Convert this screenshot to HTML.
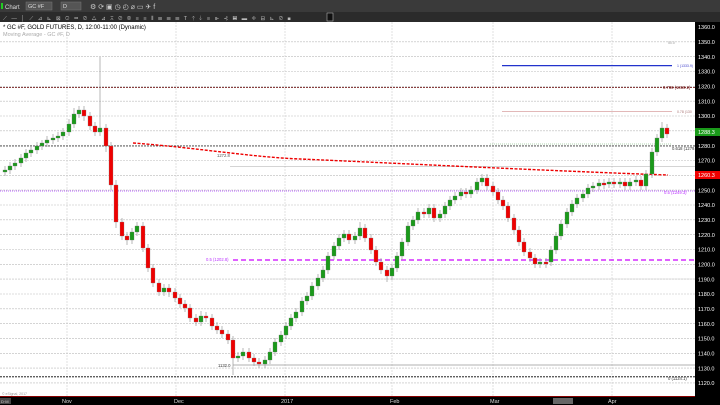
<!DOCTYPE html>
<html><head><meta charset="utf-8"><style>
html,body{margin:0;padding:0;width:720px;height:405px;overflow:hidden;background:#fff}
svg{display:block}
.g{fill:#1a9a1a;stroke:#777;stroke-width:0.3}
.r{fill:#ee0000;stroke:#888;stroke-width:0.3}
</style></head><body>
<svg width="720" height="405" viewBox="0 0 720 405" xmlns="http://www.w3.org/2000/svg" font-family="Liberation Sans, sans-serif">
<rect x="0" y="0" width="720" height="12" fill="#3a3a3a"/>
<rect x="0" y="12" width="720" height="10" fill="#2b2b2b"/>
<rect x="1" y="3" width="2" height="6" fill="#2c2"/>
<text x="5" y="9" font-size="6" fill="#ddd">Chart</text>
<rect x="26" y="2" width="26" height="8" fill="#555" stroke="#777" stroke-width="0.5"/>
<text x="28" y="8" font-size="5.5" fill="#ddd">GC #F</text>
<rect x="61" y="2" width="20" height="8" fill="#555" stroke="#777" stroke-width="0.5"/>
<text x="63" y="8" font-size="5.5" fill="#ddd">D</text>
<text x="90" y="9" font-size="7" fill="#ccc">⚙ ⟳ ▣ ◷ ◴ ⌀ ▭ ✈ f</text>
<text x="3" y="20" font-size="5.5" fill="#bbb" letter-spacing="1.5">⟋ — │ ⟋ ⊿ ⊾ ⊠ ⊙ ▭ ⊘ △ ⊿ ⊼ ⊘ ⊚ ≡ ≡ ⫴ ☰ ☰ ☰ T ⇡ ⇣ ≡ ⊪ ⊰ ▤ ▬ ◈ ⊟ ⊾ ⊘ ◼</text>
<rect x="327" y="13" width="6" height="8" fill="#111" stroke="#ccc" stroke-width="0.5"/>

<g stroke="#bbb" stroke-width="0.6" stroke-dasharray="2,1">
<path d="M0 41.8H695M0 56.7H695M0 71.5H695M0 86.3H695M0 101.2H695M0 116H695M0 130.8H695M0 145.6H695M0 160.5H695M0 175.3H695M0 190.1H695M0 205H695M0 219.8H695M0 234.6H695M0 249.5H695M0 264.3H695M0 279.1H695M0 294H695M0 308.8H695M0 323.6H695M0 338.4H695M0 353.3H695M0 368.1H695M0 382.9H695"/>
</g>
<g stroke="#ccc" stroke-width="0.6" stroke-dasharray="2,1">
<path d="M67 22V396M176 22V396M285 22V396M392 22V396M493 22V396M612 22V396"/>
</g>

<line x1="502" y1="65.6" x2="672" y2="65.6" stroke="#2233cc" stroke-width="1.2"/>
<line x1="0" y1="87.5" x2="695" y2="87.5" stroke="#660000" stroke-width="0.8" stroke-dasharray="2,1"/>
<line x1="502" y1="111.5" x2="672" y2="111.5" stroke="#d9a0a0" stroke-width="0.8"/>
<line x1="0" y1="146" x2="695" y2="146" stroke="#333" stroke-width="0.8" stroke-dasharray="2,1"/>
<line x1="490" y1="144" x2="672" y2="144" stroke="#6a6" stroke-width="0.6" stroke-dasharray="1,1"/>
<line x1="0" y1="191" x2="695" y2="191" stroke="#bb66ff" stroke-width="1" stroke-dasharray="1,1"/>
<line x1="233" y1="260" x2="695" y2="260" stroke="#cc00ff" stroke-width="1.2" stroke-dasharray="5,3"/>
<line x1="0" y1="376.8" x2="695" y2="376.8" stroke="#000" stroke-width="0.8" stroke-dasharray="2,1"/>
<line x1="233" y1="365" x2="695" y2="365" stroke="#999" stroke-width="0.8"/>
<line x1="230" y1="166.5" x2="695" y2="166.5" stroke="#aaa" stroke-width="0.6"/>
<line x1="270" y1="279" x2="695" y2="279" stroke="#ccc" stroke-width="0.6"/>

<path d="M133 143 C 200 148 250 157 300 159 S 550 171 668 175" stroke="#e00" fill="none" stroke-width="1.4" stroke-dasharray="3,1.5"/>

<path stroke="#999" stroke-width="0.7" fill="none" d="M5 166V176M10 162V174M15 159V170M21 154V167M26 149V162M31 147V157M37 142V154M42 140V150M47 136V147M53 134V144M58 132V142M63 128V140M69 119V136M74 108V128M79 106V118M84 106V121M90 112V130M95 122V136M100 57V136M106 124V152M111 142V190M116 180V228M122 218V240M127 232V245M132 228V244M137 222V236M143 222V252M148 244V272M153 264V287M159 279V296M164 284V296M169 284V297M175 288V302M180 294V308M185 300V312M190 304V322M196 314V326M201 311V326M206 312V322M212 314V330M217 322V334M222 326V338M228 330V344M233 336V375M238 352V362M243 348V360M249 348V362M254 354V366M259 358V368M265 356V368M270 348V364M275 338V356M281 331V346M286 322V339M291 314V330M296 308V322M302 297V316M307 292V305M312 282V300M318 274V290M323 266V282M328 252V274M334 242V260M339 234V250M344 230V242M349 230V244M355 232V244M360 222V240M365 224V242M371 234V254M376 246V266M381 258V274M387 266V282M392 264V280M397 252V272M402 238V260M408 222V246M413 216V230M418 208V224M424 208V218M429 204V218M434 204V222M440 210V222M445 202V218M450 196V210M455 192V204M461 188V200M466 188V198M471 186V198M477 178V194M482 174V186M487 174V190M493 182V196M498 188V204M503 196V210M508 202V222M514 214V234M519 226V246M524 238V256M530 248V262M535 254V268M540 258V268M546 258V268M551 246V266M556 232V254M561 220V240M567 208V228M572 200V216M577 194V208M583 190V202M588 184V198M593 182V192M599 179V190M604 179V189M609 178V188M614 178V188M620 178V188M625 178V190M630 178V190M636 176V186M641 176V190M646 170V190M652 148V178M657 134V156M662 122V142M667 124V138"/>

<g>
<rect class="g" x="3" y="170" width="4" height="2"/><rect class="g" x="8" y="166" width="4" height="4"/><rect class="g" x="13" y="163" width="4" height="3"/><rect class="g" x="19" y="158" width="4" height="5"/><rect class="g" x="24" y="153" width="4" height="5"/><rect class="g" x="29" y="150" width="4" height="3"/><rect class="g" x="35" y="146" width="4" height="4"/><rect class="g" x="40" y="143" width="4" height="3"/><rect class="g" x="45" y="140" width="4" height="3"/><rect class="g" x="51" y="138" width="4" height="2"/><rect class="g" x="56" y="136" width="4" height="2"/><rect class="g" x="61" y="132" width="4" height="4"/><rect class="g" x="67" y="124" width="4" height="8"/><rect class="g" x="72" y="114" width="4" height="10"/><rect class="g" x="77" y="110" width="4" height="4"/>
<rect class="r" x="82" y="110" width="4" height="6"/><rect class="r" x="88" y="116" width="4" height="10"/><rect class="r" x="93" y="126" width="4" height="6"/><rect class="g" x="98" y="128" width="4" height="4"/><rect class="r" x="104" y="128" width="4" height="18"/><rect class="r" x="109" y="146" width="4" height="39"/><rect class="r" x="114" y="185" width="4" height="37"/><rect class="r" x="120" y="222" width="4" height="14"/><rect class="r" x="125" y="236" width="4" height="4"/><rect class="g" x="130" y="232" width="4" height="8"/><rect class="g" x="135" y="226" width="4" height="6"/><rect class="r" x="141" y="226" width="4" height="22"/><rect class="r" x="146" y="248" width="4" height="20"/><rect class="r" x="151" y="268" width="4" height="15"/><rect class="r" x="157" y="283" width="4" height="9"/><rect class="g" x="162" y="288" width="4" height="4"/><rect class="r" x="167" y="288" width="4" height="4"/><rect class="r" x="173" y="292" width="4" height="6"/><rect class="r" x="178" y="298" width="4" height="6"/><rect class="r" x="183" y="304" width="4" height="4"/><rect class="r" x="188" y="308" width="4" height="10"/><rect class="r" x="194" y="318" width="4" height="4"/><rect class="g" x="199" y="316" width="4" height="6"/><rect class="r" x="204" y="316" width="4" height="2"/><rect class="r" x="210" y="318" width="4" height="8"/><rect class="r" x="215" y="326" width="4" height="4"/><rect class="r" x="220" y="330" width="4" height="4"/><rect class="r" x="226" y="334" width="4" height="6"/><rect class="r" x="231" y="340" width="4" height="18"/><rect class="g" x="236" y="356" width="4" height="2"/><rect class="g" x="241" y="352" width="4" height="4"/><rect class="r" x="247" y="352" width="4" height="6"/><rect class="r" x="252" y="358" width="4" height="4"/><rect class="r" x="257" y="362" width="4" height="2"/><rect class="g" x="263" y="360" width="4" height="4"/><rect class="g" x="268" y="352" width="4" height="8"/><rect class="g" x="273" y="342" width="4" height="10"/><rect class="g" x="279" y="335" width="4" height="7"/><rect class="g" x="284" y="326" width="4" height="9"/><rect class="g" x="289" y="318" width="4" height="8"/><rect class="g" x="294" y="312" width="4" height="6"/><rect class="g" x="300" y="301" width="4" height="11"/><rect class="g" x="305" y="296" width="4" height="5"/><rect class="g" x="310" y="286" width="4" height="10"/><rect class="g" x="316" y="278" width="4" height="8"/><rect class="g" x="321" y="270" width="4" height="8"/><rect class="g" x="326" y="256" width="4" height="14"/><rect class="g" x="332" y="246" width="4" height="10"/><rect class="g" x="337" y="238" width="4" height="8"/><rect class="g" x="342" y="234" width="4" height="4"/><rect class="r" x="347" y="234" width="4" height="6"/><rect class="g" x="353" y="236" width="4" height="4"/><rect class="g" x="358" y="228" width="4" height="8"/><rect class="r" x="363" y="228" width="4" height="10"/><rect class="r" x="369" y="238" width="4" height="12"/><rect class="r" x="374" y="250" width="4" height="12"/><rect class="r" x="379" y="262" width="4" height="8"/><rect class="r" x="385" y="270" width="4" height="6"/><rect class="g" x="390" y="268" width="4" height="8"/><rect class="g" x="395" y="256" width="4" height="12"/><rect class="g" x="400" y="242" width="4" height="14"/><rect class="g" x="406" y="226" width="4" height="16"/><rect class="g" x="411" y="220" width="4" height="6"/><rect class="g" x="416" y="212" width="4" height="8"/><rect class="r" x="422" y="212" width="4" height="2"/><rect class="g" x="427" y="208" width="4" height="6"/><rect class="r" x="432" y="208" width="4" height="10"/><rect class="g" x="438" y="214" width="4" height="4"/><rect class="g" x="443" y="206" width="4" height="8"/><rect class="g" x="448" y="200" width="4" height="6"/><rect class="g" x="453" y="196" width="4" height="4"/><rect class="g" x="459" y="192" width="4" height="4"/><rect class="r" x="464" y="192" width="4" height="2"/><rect class="g" x="469" y="190" width="4" height="4"/><rect class="g" x="475" y="182" width="4" height="8"/><rect class="g" x="480" y="178" width="4" height="4"/><rect class="r" x="485" y="178" width="4" height="8"/><rect class="r" x="491" y="186" width="4" height="6"/><rect class="r" x="496" y="192" width="4" height="8"/><rect class="r" x="501" y="200" width="4" height="6"/><rect class="r" x="506" y="206" width="4" height="12"/><rect class="r" x="512" y="218" width="4" height="12"/><rect class="r" x="517" y="230" width="4" height="12"/><rect class="r" x="522" y="242" width="4" height="10"/><rect class="r" x="528" y="252" width="4" height="6"/><rect class="r" x="533" y="258" width="4" height="6"/><rect class="g" x="538" y="262" width="4" height="2"/><rect class="r" x="544" y="262" width="4" height="2"/><rect class="g" x="549" y="250" width="4" height="12"/><rect class="g" x="554" y="236" width="4" height="14"/><rect class="g" x="559" y="224" width="4" height="12"/><rect class="g" x="565" y="212" width="4" height="12"/><rect class="g" x="570" y="204" width="4" height="8"/><rect class="g" x="575" y="198" width="4" height="6"/><rect class="g" x="581" y="194" width="4" height="4"/><rect class="g" x="586" y="188" width="4" height="6"/><rect class="g" x="591" y="186" width="4" height="2"/><rect class="g" x="597" y="183" width="4" height="3"/><rect class="r" x="602" y="183" width="4" height="2"/><rect class="g" x="607" y="182" width="4" height="2"/><rect class="r" x="612" y="182" width="4" height="2"/><rect class="g" x="618" y="182" width="4" height="2"/><rect class="r" x="623" y="182" width="4" height="4"/><rect class="g" x="628" y="182" width="4" height="4"/><rect class="g" x="634" y="180" width="4" height="2"/><rect class="r" x="639" y="180" width="4" height="6"/><rect class="g" x="644" y="174" width="4" height="12"/><rect class="g" x="650" y="152" width="4" height="22"/><rect class="g" x="655" y="138" width="4" height="14"/><rect class="g" x="660" y="128" width="4" height="10"/><rect class="r" x="665" y="128" width="4" height="6"/>
</g>

<g font-size="4.2">
<text x="677" y="67" font-size="3.5" fill="#44c">1 (1333.9)</text>
<text x="663" y="89" fill="#600">0.786 (1319.2)</text>
<text x="677" y="113" font-size="3.5" fill="#a77">0.78 (130</text>
<text x="672" y="150" fill="#333">0.618 (1279.7)</text>
<text x="664" y="194" fill="#b3f">0.5 (1249.3)</text>
<text x="206" y="261" fill="#b3f">0.5 (1202.8)</text>
<text x="668" y="380" fill="#333">0 (1124.1)</text>
<text x="218" y="367" fill="#333">1132.0</text>
<text x="217" y="157" fill="#555">1272.8</text>
<text x="668" y="44" font-size="3.5" fill="#999">50.0</text>
</g>

<rect x="695" y="22" width="25" height="375" fill="#000"/>
<g font-size="5.5" fill="#fff">
<text x="698" y="29">1360.0</text><text x="698" y="44">1350.0</text><text x="698" y="59">1340.0</text><text x="698" y="73.7">1330.0</text><text x="698" y="88.5">1320.0</text><text x="698" y="103.4">1310.0</text><text x="698" y="118.2">1300.0</text><text x="698" y="133">1290.0</text><text x="698" y="147.8">1280.0</text><text x="698" y="162.7">1270.0</text><text x="698" y="192.3">1250.0</text><text x="698" y="207.2">1240.0</text><text x="698" y="222">1230.0</text><text x="698" y="236.8">1220.0</text><text x="698" y="251.7">1210.0</text><text x="698" y="266.5">1200.0</text><text x="698" y="281.3">1190.0</text><text x="698" y="296.2">1180.0</text><text x="698" y="311">1170.0</text><text x="698" y="325.8">1160.0</text><text x="698" y="340.6">1150.0</text><text x="698" y="355.5">1140.0</text><text x="698" y="370.3">1130.0</text><text x="698" y="385.1">1120.0</text>
</g>
<rect x="695" y="128" width="25" height="8" fill="#1a9a1a"/>
<text x="698" y="134" font-size="5.5" fill="#fff">1288.3</text>
<rect x="695" y="171" width="25" height="8" fill="#e00"/>
<text x="698" y="177" font-size="5.5" fill="#fff">1260.3</text>

<text x="3" y="29" font-size="6" fill="#000">* GC #F, GOLD FUTURES, D, 12:00-11:00 (Dynamic)</text>
<text x="3" y="36" font-size="5.5" fill="#aaa">Moving Average - GC #F, D</text>
<text x="2" y="395" font-size="3.5" fill="#999">© eSignal, 2017</text>
<rect x="0" y="397" width="720" height="8" fill="#000"/>
<line x1="0" y1="396.5" x2="695" y2="396.5" stroke="#800" stroke-width="1"/>
<rect x="0" y="398" width="11" height="6" fill="#444"/>
<text x="1" y="403" font-size="4" fill="#ccc">D·M</text>
<g font-size="5.5" fill="#ddd">
<text x="62" y="403">Nov</text><text x="174" y="403">Dec</text><text x="281" y="403">2017</text>
<text x="390" y="403">Feb</text><text x="490" y="403">Mar</text><text x="608" y="403">Apr</text></g>
<rect x="553" y="398" width="20" height="6" fill="#666"/>
</svg>
</body></html>
